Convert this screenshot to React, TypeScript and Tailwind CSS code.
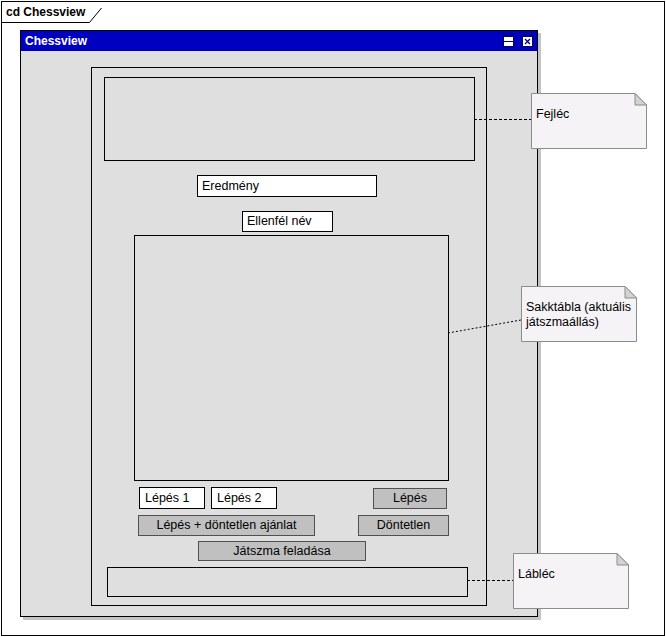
import React from "react";

const font = "font-['Liberation_Sans',Arial,sans-serif]";

function Note({ x, y, w, h, lines, padTop }: { x: number; y: number; w: number; h: number; lines: string[]; padTop: number }) {
  return (
    <div className="absolute" style={{ left: x, top: y, width: w, height: h }}>
      <svg className="absolute inset-0" width={w} height={h}>
        <path d={`M0.5 0.5 H${w - 12} L${w - 0.5} 12 V${h - 0.5} H0.5 Z`} fill="#f5f3f5" stroke="#8c8c8c" />
        <path d={`M${w - 12} 0.5 V12 H${w - 0.5} Z`} fill="#d2d2d2" stroke="#8c8c8c" />
      </svg>
      <div className="relative pl-[5px] text-[12.5px] leading-[15px] text-black" style={{ paddingTop: padTop }}>
        {lines.map((l) => (
          <div key={l}>{l}</div>
        ))}
      </div>
    </div>
  );
}

function Btn({ label, cls }: { label: string; cls: string }) {
  return (
    <div className={`flex items-center justify-center border border-[#505050] bg-[#c0c0c0] text-[12.5px] text-black ${cls}`}>
      {label}
    </div>
  );
}

export default function App() {
  return (
    <div className={`relative w-[666px] h-[637px] bg-white ${font}`}>
      <div className="ml-[1px] mt-[1px] w-[664px] h-[635px] border border-black">
        {/* frame tab */}
        <div className="relative w-[100px] h-[21px]">
          <svg className="absolute left-0 top-0" width="100" height="21">
            <path d="M-1 20.5 H87.5 L99.5 6" fill="none" stroke="black" />
          </svg>
          <div className="relative pl-[4px] pt-[3px] text-[12px] font-bold leading-[14px] text-black">cd Chessview</div>
        </div>

        {/* window */}
        <div className="ml-[18px] mt-[7px] w-[518px] h-[587px] border border-black bg-[#dfdfdf] shadow-[3px_3px_0_#c4c4c4]">
          <div className="flex h-[20px] items-center justify-between bg-[#0000c0] pl-[4px] pr-[3px]">
            <span className="text-[12px] font-bold text-white">Chessview</span>
            <div className="flex gap-[6px]">
              <div className="flex h-[14px] w-[13px] items-center justify-center bg-[#00008c]">
                <svg width="9" height="9">
                  <rect x="0" y="0" width="9" height="4" fill="white" />
                  <rect x="0" y="5" width="9" height="4" fill="white" />
                </svg>
              </div>
              <div className="flex h-[14px] w-[13px] items-center justify-center bg-[#00008c]">
                <svg width="9" height="9">
                  <rect x="0.5" y="0.5" width="8" height="8" fill="white" stroke="white" />
                  <path d="M2 2 L7 7 M7 2 L2 7" stroke="#00008c" strokeWidth="1.3" />
                </svg>
              </div>
            </div>
          </div>

          <div className="ml-[70px] mt-[16px] w-[396px] h-[539px] border border-black">
            <div className="ml-[12px] mt-[9px] w-[371px] h-[84px] border border-black" />
            <div className="ml-[105px] mt-[14px] flex w-[180px] h-[22px] items-center border border-black bg-white pl-[4px] text-[12.5px] text-black">
              Eredmény
            </div>
            <div className="ml-[150px] mt-[14px] flex w-[91px] h-[21px] items-center border border-black bg-white pl-[4px] text-[12.5px] text-black">
              Ellenfél név
            </div>
            <div className="ml-[42px] mt-[3px] w-[315px] h-[246px] border border-black" />

            <div className="mt-[6px] flex items-start">
              <div className="ml-[47px] flex w-[66px] h-[22px] items-center border border-black bg-white pl-[5px] text-[12.5px] text-black">Lépés 1</div>
              <div className="ml-[6px] flex w-[66px] h-[22px] items-center border border-black bg-white pl-[5px] text-[12.5px] text-black">Lépés 2</div>
              <Btn label="Lépés" cls="ml-[96px] mt-[1px] w-[74px] h-[21px]" />
            </div>
            <div className="mt-[6px] flex items-start">
              <Btn label="Lépés + döntetlen ajánlat" cls="ml-[46px] w-[177px] h-[21px]" />
              <Btn label="Döntetlen" cls="ml-[43px] w-[91px] h-[21px]" />
            </div>
            <Btn label="Játszma feladása" cls="ml-[106px] mt-[5px] w-[168px] h-[20px]" />
            <div className="ml-[15px] mt-[6px] w-[361px] h-[30px] border border-black" />
          </div>
        </div>
      </div>

      {/* connectors */}
      <svg className="absolute left-0 top-0" width="666" height="637">
        <line x1="474" y1="118.5" x2="531" y2="118.5" stroke="black" strokeDasharray="3 2" />
        <line x1="448" y1="332" x2="521" y2="319" stroke="black" strokeDasharray="2 2" />
        <line x1="467" y1="579.5" x2="513" y2="579.5" stroke="black" strokeDasharray="3 2" />
      </svg>

      <Note x={531} y={92} w={116} h={56} lines={["Fejléc"]} padTop={14} />
      <Note x={521} y={285} w={116} h={56} lines={["Sakktábla (aktuális", "játszmaállás)"]} padTop={14} />
      <Note x={513} y={552} w={116} h={56} lines={["Lábléc"]} padTop={14} />
    </div>
  );
}
